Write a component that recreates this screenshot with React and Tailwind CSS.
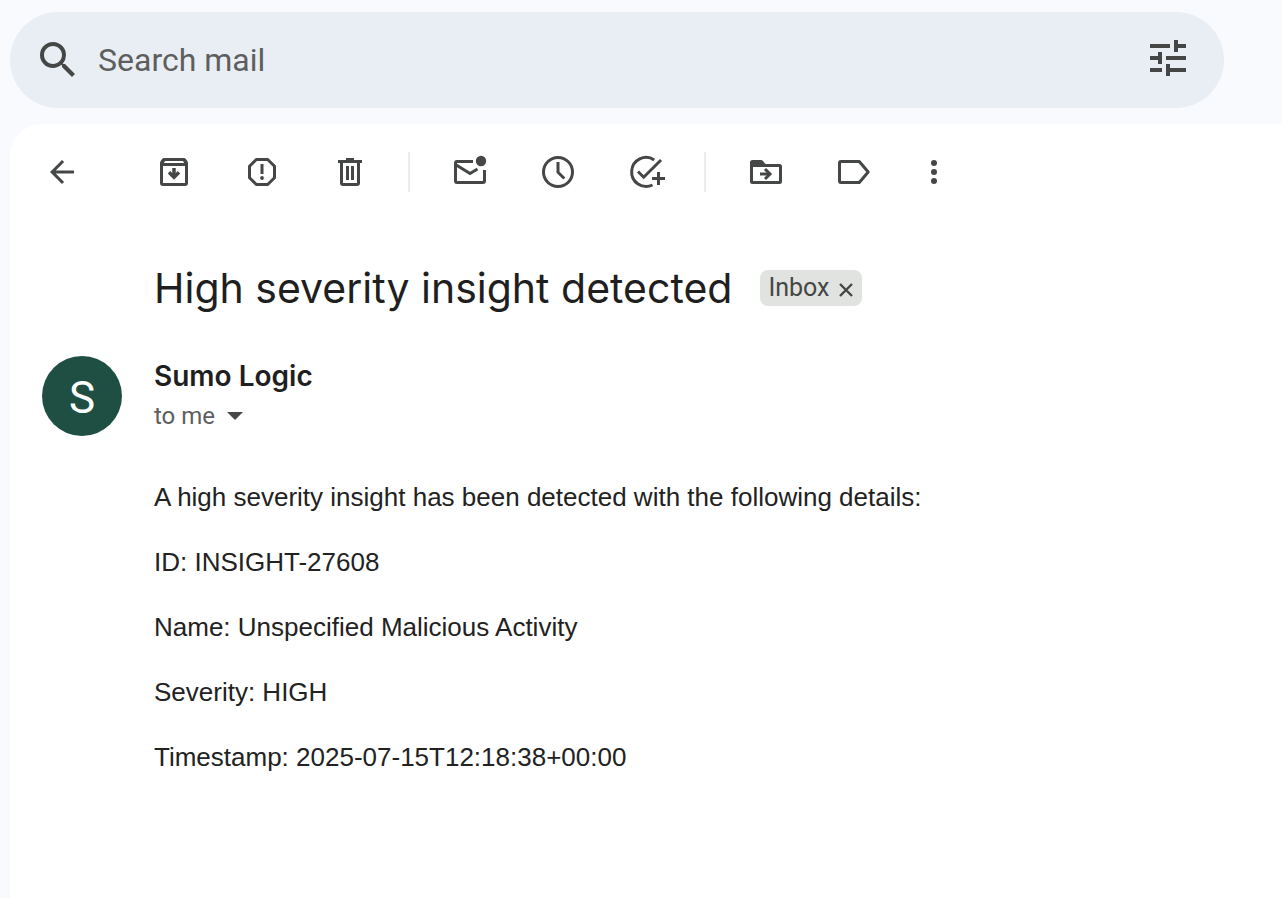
import React from "react";

function Icon({ children, size = "size-10", viewBox = "0 0 40 40" }) {
  return (
    <svg className={`${size} block shrink-0`} viewBox={viewBox} fill="none" stroke="none" aria-hidden="true">
      {children}
    </svg>
  );
}

const stroke = { stroke: "currentColor", strokeWidth: 3 };

const icons = {
  back: (
    <path
      fill="currentColor"
      transform="translate(2 2) scale(1.5)"
      d="M20 11H7.830l5.590-5.590L12 4l-8 8 8 8 1.410-1.410L7.830 13H20v-2z"
    />
  ),
  archive: (
    <>
      <path
        fill="currentColor"
        fillRule="evenodd"
        d="M10 6h20c.7 0 1.300.3 1.700.8l1.600 2.200c.5.6.7 1.300.7 2V31a3 3 0 0 1-3 3H9a3 3 0 0 1-3-3V11c0-.7.2-1.400.7-2l1.600-2.200c.4-.5 1-.8 1.700-.8zM9.800 11h20.400l-1.300-2H11.100zM9 14v17h22V14z"
      />
      <path {...stroke} strokeWidth={3.5} d="M20 16v9" />
      <path {...stroke} strokeWidth={3.5} d="M15 20.300l5 5 5-5" />
    </>
  ),
  spam: (
    <>
      <path {...stroke} strokeLinejoin="round" d="M14.300 7.500h11.400l6.800 6.800v11.400l-6.800 6.800H14.300l-6.800-6.800V14.300z" />
      <path {...stroke} d="M20 12v10" />
      <circle cx="20" cy="26" r="1.900" fill="currentColor" />
    </>
  ),
  trash: (
    <>
      <path fill="currentColor" d="M16 6h8v2h8v3H8V8h8z" />
      <path {...stroke} d="M11.500 10v21a1.500 1.500 0 0 0 1.500 1.500h14a1.500 1.500 0 0 0 1.500-1.500V10" />
      <path {...stroke} d="M17.500 14v14M22.500 14v14" />
    </>
  ),
  unread: (
    <>
      <path
        {...stroke}
        d="M23 9.500H7A1.500 1.500 0 0 0 5.500 11v18A1.500 1.500 0 0 0 7 30.500h26a1.500 1.500 0 0 0 1.500-1.500V18"
      />
      <path {...stroke} d="M5.500 12.500L20 21.500l7.500-4.500" />
      <circle cx="31" cy="9" r="5.200" fill="currentColor" />
    </>
  ),
  snooze: (
    <>
      <circle {...stroke} cx="20" cy="20" r="14.500" />
      <path {...stroke} d="M20 10v10.200l6.300 6.300" />
    </>
  ),
  task: (
    <>
      <path {...stroke} d="M28.200 7.900A14.500 14.500 0 1 0 26.500 33" />
      <path {...stroke} d="M12 19.500l5.700 5.700L35 8" />
      <path {...stroke} d="M32.500 20v13M26 26.500h13" />
    </>
  ),
  move: (
    <>
      <path
        fill="currentColor"
        fillRule="evenodd"
        d="M6.500 8H15a2 2 0 0 1 1.500.6L19.500 12h14a2.500 2.500 0 0 1 2.500 2.500v15a2.500 2.500 0 0 1-2.500 2.500h-27A2.500 2.500 0 0 1 4 29.500v-19A2.500 2.500 0 0 1 6.500 8zM7 15v14h26V15z"
      />
      <path {...stroke} d="M14 22h9.500" />
      <path {...stroke} d="M19 17l5 5-5 5" />
    </>
  ),
  label: (
    <path {...stroke} strokeLinejoin="round" d="M7 9.500h18.300l8.900 10.500-8.900 10.500H7A1.500 1.500 0 0 1 5.500 29V11A1.500 1.500 0 0 1 7 9.500z" />
  ),
  more: (
    <g fill="currentColor">
      <circle cx="20" cy="11" r="3" />
      <circle cx="20" cy="20" r="3" />
      <circle cx="20" cy="29" r="3" />
    </g>
  ),
};

function ToolButton({ label, icon }) {
  return (
    <button type="button" aria-label={label} className="size-10 shrink-0">
      <Icon>{icons[icon]}</Icon>
    </button>
  );
}

function Divider() {
  return <div className="ml-[38px] mr-10 h-10 w-0.5 shrink-0 bg-[#ececec]" />;
}

const details = [
  "A high severity insight has been detected with the following details:",
  "ID: INSIGHT-27608",
  "Name: Unspecified Malicious Activity",
  "Severity: HIGH",
  "Timestamp: 2025-07-15T12:18:38+00:00",
];

export default function App() {
  return (
    <div className="flex min-h-screen flex-col bg-[#f8fafd] pl-2.5 pt-3 font-['Roboto',sans-serif] text-[#444746]">
      <form role="search" className="mr-[58px] flex h-24 items-center rounded-full bg-[#e9eef5] pl-6 pr-8">
        <button type="button" aria-label="Search" className="shrink-0">
          <Icon size="size-12" viewBox="0 0 24 24">
            <path
              fill="currentColor"
              d="M15.500 14h-.79l-.28-.27A6.471 6.471 0 0 0 16 9.500 6.500 6.500 0 1 0 9.500 16c1.610 0 3.090-.59 4.230-1.570l.27.28v.79l5 4.990L20.490 19l-4.990-5zm-6 0C7.010 14 5 11.990 5 9.500S7.010 5 9.500 5 14 7.010 14 9.500 11.990 14 9.500 14z"
            />
          </Icon>
        </button>
        <input
          type="text"
          aria-label="Search mail"
          placeholder="Search mail"
          className="ml-4 min-w-0 flex-1 bg-transparent text-[32px] leading-10 outline-none placeholder:text-[#5e5e5e]"
        />
        <button type="button" aria-label="Show search options" className="mb-1 shrink-0">
          <Icon size="size-12" viewBox="0 0 24 24">
            <path
              fill="currentColor"
              d="M3 17v2h6v-2H3zM3 5v2h10V5H3zm10 16v-2h8v-2h-8v-2h-2v6h2zM7 9v2H3v2h4v2h2V9H7zm14 4v-2H11v2h10zm-6-4h2V7h4V5h-4V3h-2v6z"
            />
          </Icon>
        </button>
      </form>

      <main className="mt-4 flex-1 rounded-tl-[32px] bg-white pl-8 pt-7">
        <div role="toolbar" aria-label="Message actions" className="flex items-center">
          <ToolButton label="Back to Inbox" icon="back" />
          <div className="ml-[72px] flex gap-12">
            <ToolButton label="Archive" icon="archive" />
            <ToolButton label="Report spam" icon="spam" />
            <ToolButton label="Delete" icon="trash" />
          </div>
          <Divider />
          <div className="flex gap-12">
            <ToolButton label="Mark as unread" icon="unread" />
            <ToolButton label="Snooze" icon="snooze" />
            <ToolButton label="Add to Tasks" icon="task" />
          </div>
          <Divider />
          <div className="flex gap-12">
            <ToolButton label="Move to" icon="move" />
            <ToolButton label="Labels" icon="label" />
          </div>
          <div className="ml-10 flex">
            <ToolButton label="More" icon="more" />
          </div>
        </div>

        <div className="mt-[68px] flex items-center pl-28">
          <h1 className="font-['Inter',sans-serif] text-[41px] leading-[56px] text-[#1f1f1f]">
            High severity insight detected
          </h1>
          <div className="ml-7 flex h-9 items-center rounded-lg bg-[#e1e3e1] px-2 text-[25px]">
            <span>Inbox</span>
            <button type="button" aria-label="Remove label Inbox" className="ml-2 mt-1">
              <Icon size="size-4" viewBox="0 0 16 16">
                <path stroke="currentColor" strokeWidth="2.400" d="M2 2l12 12M14 2L2 14" />
              </Icon>
            </button>
          </div>
        </div>

        <div className="mt-10 flex gap-8">
          <div className="flex size-20 shrink-0 items-center justify-center rounded-full bg-[#1f4e42] pt-1 text-[44px] leading-none text-white">
            S
          </div>
          <div>
            <h2 className="font-['Inter',sans-serif] text-[28px] font-semibold leading-10 text-[#1f1f1f]">Sumo Logic</h2>
            <div className="flex items-center text-2xl leading-10 text-[#5e5e5e]">
              <span>to me</span>
              <button type="button" aria-label="Show details" className="ml-3 text-[#444746]">
                <Icon size="size-4" viewBox="0 0 16 16">
                  <path fill="currentColor" d="M0 4h16l-8 8z" />
                </Icon>
              </button>
            </div>
          </div>
        </div>

        <div className="mt-[41px] flex flex-col gap-[25px] pb-10 pl-28 font-['Liberation_Sans',sans-serif] text-[26px] leading-10 text-[#222222]">
          {details.map((line) => (
            <p key={line}>{line}</p>
          ))}
        </div>
      </main>
    </div>
  );
}
